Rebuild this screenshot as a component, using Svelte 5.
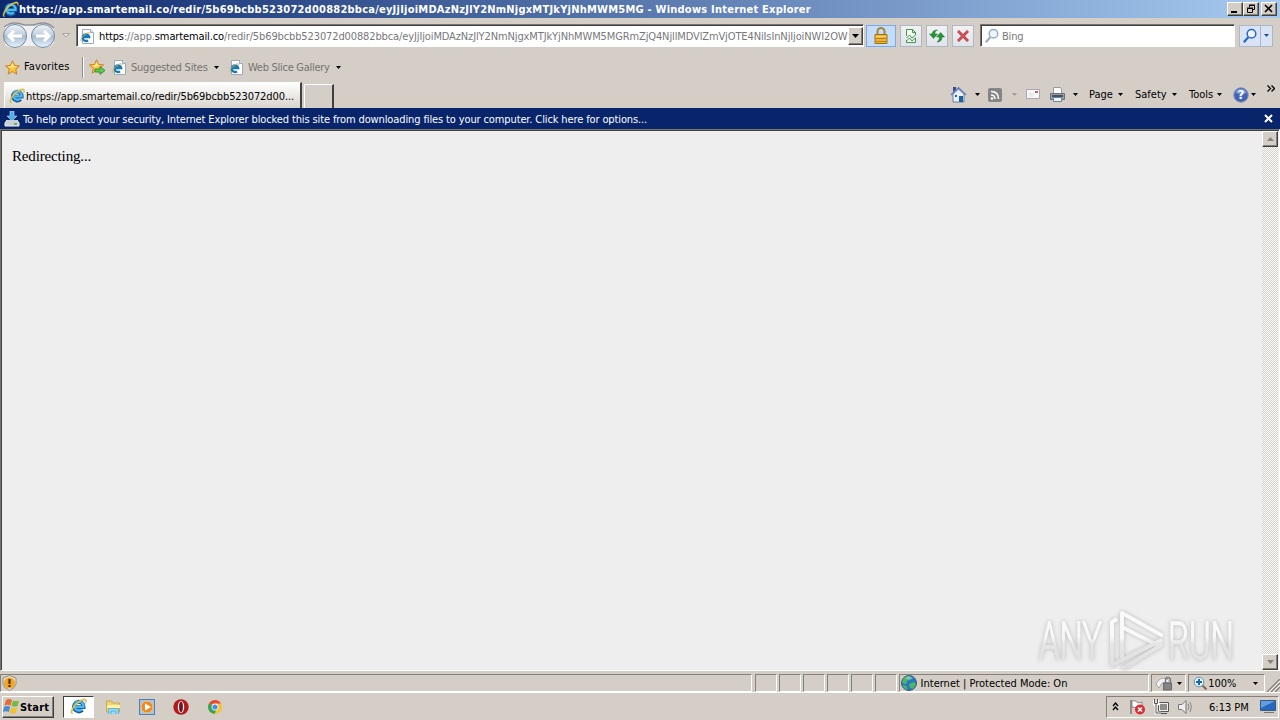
<script lang="ts">
	const host = 'https://app.smartemail.co';
	const title = host + '/redir/5b69bcbb523072d00882bbca/eyJjIjoiMDAzNzJlY2NmNjgxMTJkYjNhMWM5MG - Windows Internet Explorer';
	const path = '/redir/5b69bcbb523072d00882bbca/eyJjIjoiMDAzNzJlY2NmNjgxMTJkYjNhMWM5MGRmZjQ4NjllMDVlZmVjOTE4NiIsInNjIjoiNWI2OW';
	const menus = ['Page', 'Safety', 'Tools'];
	const emptyPanes = [1, 2, 3, 4, 5, 6];
</script>

{#snippet ie(size: number)}
	<svg class="icon" width={size} height={size} viewBox="0 0 16 16">
		<path d="M11.6 11.2A4.5 4.5 0 1 1 12.8 8.6H5.2" fill="none" stroke="#135d9c" stroke-width="3.7" />
		<path d="M11.3 10.7A4.2 4.2 0 1 1 12.6 8.4H5.2" fill="none" stroke="#4fb6ee" stroke-width="2.2" />
		<path d="M2.6 14.8C.3 15 .2 12 3 8.1 6.3 3.4 12.8-.6 15 1.3c.9.8.6 2.3-.2 3.8.1-1.3.1-2.4-.8-2.8-2.2-.7-6.6 2.3-9.4 5.8-2.5 3.2-3.2 6-2 6.7Z" fill="#f0d458" stroke="#a39134" stroke-width=".35" />
	</svg>
{/snippet}

{#snippet iePage()}
	<svg class="icon" width="15" height="15" viewBox="0 0 15 15">
		<path d="M2.5.5h8l3 3v11h-11Z" fill="#fff" stroke="#9aa9bd" />
		<path d="M10.5.5v3h3" fill="#dce5f2" stroke="#9aa9bd" />
		<path d="M8 11.3A3.3 3.3 0 1 1 9.2 8H3.5" fill="none" stroke="#1677b9" stroke-width="2.3" />
		<path d="M1.4 12.5C-.5 11.8 3 5.7 7.5 4c1.6-.5 2.5-.1 2.5 1" fill="none" stroke="#d0b44a" />
	</svg>
{/snippet}

{#snippet star()}
	<path d="m7.5.8 2 4.6 5 .5-3.8 3.3 1.1 4.9-4.3-2.6-4.3 2.6 1.1-4.9L.5 5.9l5-.5Z" fill="#fbc63b" stroke="#c77a16" stroke-width=".9" />
	<path d="m7.5 2.5 1.2 3.6 3.3.5-6.7 1.1-2.6-1 3.4-.5Z" fill="#ffeb91" />
{/snippet}

{#snippet caret(color = '#000')}
	<svg class="caret" width="5" height="3" viewBox="0 0 5 3"><path d="M0 0h5L2.5 3Z" fill={color} /></svg>
{/snippet}

{#snippet magnifier(color: string)}
	<svg class="icon" width="16" height="16" viewBox="0 0 16 16">
		<path d="m1.8 14.2 4.5-5" stroke={color} stroke-width="2.2" />
		<circle cx="9.5" cy="5.8" r="4.3" fill="#edf5ff" stroke={color} stroke-width="1.5" />
	</svg>
{/snippet}

<div class="screen">
	<header class="titlebar">
		{@render ie(17)}
		<span class="title low">{title}</span>
		<div class="window-buttons">
			<button aria-label="Minimize"><svg width="12" height="10"><path d="M2 8h6" stroke="#000" stroke-width="2" /></svg></button>
			<button aria-label="Restore"><svg width="12" height="10"><path d="M4.5 3V1.5h5v4H8M4 1h6M2.5 4.5h5v4h-5ZM2 4h6" fill="none" stroke="#000" /></svg></button>
			<button class="close" aria-label="Close"><svg width="12" height="10"><path d="m2 1 7 7m0-7L2 8" stroke="#000" stroke-width="1.6" /></svg></button>
		</div>
	</header>

	<div class="nav-row">
		<svg class="nav-arrows" width="58" height="28" viewBox="0 0 58 28">
			<defs>
				<linearGradient id="orb" x2="0" y2="1">
					<stop stop-color="#eef3f8" /><stop offset=".45" stop-color="#c3d0df" /><stop offset=".5" stop-color="#a7bbcf" /><stop offset="1" stop-color="#e6f6ff" />
				</linearGradient>
			</defs>
			<path d="M5 4Q14-2 24 3h10q12-5 20 4v14q-8 8-19 3H23Q13 29 5 23Z" fill="#eef0f3" />
			<path d="M4 5Q13-2 24 3h10q12-5 20 3" fill="none" stroke="#8d929b" stroke-width="1.5" />
			<circle cx="15" cy="14" r="11.5" fill="url(#orb)" stroke="#74899d" />
			<circle cx="43" cy="14" r="11.5" fill="url(#orb)" stroke="#74899d" />
			<path d="M22 14H9m5-5-5 5 5 5M36 14h13m-5-5 5 5-5 5" fill="none" stroke="#fff" stroke-width="3" />
		</svg>
		<svg class="recent" width="8" height="5"><path d="M.5.5h7L4 4Z" fill="#e6e2dc" stroke="#aaa69f" /></svg>
		<div class="address sunken">
			{@render iePage()}
			<span class="url"><b>https</b>://app.<b>smartemail.co</b>{path}</span>
			<button class="drop" aria-label="Show addresses"><svg width="7" height="4"><path d="M0 0h7L3.5 4Z" /></svg></button>
		</div>
		<button class="lock" aria-label="Security report">
			<svg width="16" height="18" viewBox="0 0 16 18">
				<path d="M4.5 8V4.5a3.5 3.5 0 0 1 7 0V8" fill="none" stroke="#a3863a" stroke-width="2" />
				<path d="M2 7.5h12v9H2Z" fill="#efb42c" stroke="#9b721d" />
				<path d="M3 9.5h10" stroke="#ffdc70" /><path d="M3 11.5h10M3 14.5h10" stroke="#ba831e" />
			</svg>
		</button>
		<button class="tool" aria-label="Compatibility view">
			<svg width="14" height="16" viewBox="0 0 14 16"><path d="M2.5 8V1.5h6l3 3V7L8 10 5.5 7l-3 3M8.5 1.5v3h3M2.5 12v2.5h9V10L8 13l-2.5-3-3 3" fill="#f1faed" stroke="#439650" /></svg>
		</button>
		<button class="tool" aria-label="Refresh">
			<svg width="16" height="14" viewBox="0 0 16 14"><path d="M8.5 1C5 1 3.3 2.3 3.1 5H.5l4 4.5 4-4.5H5.8C5.8 3 6.5 1.8 8.5 1ZM8 13c3.3-.2 5-1.5 5-5h2.6l-4-4.5-4 4.5h2.8c0 2.4-.6 3.8-2.4 5Z" fill="#299336" stroke="#187425" stroke-width=".5" /></svg>
		</button>
		<button class="tool" aria-label="Stop">
			<svg width="14" height="14"><path d="m2 2 10 10M12 2 2 12" stroke="#a73038" stroke-width="2.6" /><path d="m2 2 10 10M12 2 2 12" stroke="#e25a61" stroke-width="1.2" /></svg>
		</button>
		<div class="search sunken">{@render magnifier('#9cacc2')}<span class="low">Bing</span></div>
		<button class="go" aria-label="Search">{@render magnifier('#2867c5')}</button>
		<button class="go-menu" aria-label="Search options">{@render caret('#244d85')}</button>
	</div>

	<div class="favorites">
		<svg class="icon" width="15" height="15">{@render star()}</svg>
		<span class="fav-label">Favorites</span>
		<i class="divider"></i>
		<svg class="icon add-fav" width="17" height="16">{@render star()}<path d="M6 10h5V7.5l5 4-5 4V13H6Z" fill="#62c84d" stroke="#26872d" stroke-width=".8" /></svg>
		{@render iePage()}
		<span class="link low suggested">Suggested Sites</span>
		{@render caret()}
		<span class="slice-icon">{@render iePage()}</span>
		<span class="link low gallery">Web Slice Gallery</span>
		{@render caret()}
	</div>

	<div class="tab-row">
		<div class="tab">{@render ie(16)}<span class="low">{host}/redir/5b69bcbb523072d00...</span></div>
		<div class="new-tab"></div>
		<div class="commands">
			<svg class="icon" width="17" height="17" viewBox="0 0 17 17">
				<path d="M3 8v8h11V8L8.5 3Z" fill="#e8f0fa" stroke="#687e9f" />
				<path d="M3 1h3v3L3 6Z" fill="#344b9b" /><path d="m1 9 7.5-7L16 9" fill="none" stroke="#6684b6" stroke-width="1.7" />
				<path d="M9 10h4v6H9Z" fill="#1e619b" /><path d="M5 9h2v2H5Z" fill="#415580" />
			</svg>
			<span class="home-caret">{@render caret()}</span>
			<svg class="icon feed" width="14" height="14"><rect width="14" height="14" rx="2" fill="#858585" /><circle cx="4" cy="10.5" r="1.3" fill="#fff" /><path d="M3 7q4 0 4 4M3 3.5q7.5 0 7.5 7.5" fill="none" stroke="#fff" stroke-width="1.5" /></svg>
			<span class="feed-caret">{@render caret('#a39d94')}</span>
			<svg class="icon mail" width="14" height="11"><path d="M.5.5h13v9H.5Z" fill="#f8f7f8" stroke="#aaa5b2" /><path d="M9 2h3v2H9Z" fill="#c6646c" /><path d="M3 5h5M3 7h4" stroke="#ddd" /></svg>
			<svg class="icon printer" width="17" height="16"><path d="M4.5 7V.5h7l1 2V7" fill="#fff" stroke="#999" /><path d="M1.5 6.5h14v6h-14Z" fill="#9a9fa5" stroke="#6b7078" /><path d="M3 8h11v2H3Z" fill="#4a515a" /><path d="M4.5 10.5h8v4h-8Z" fill="#edf7ff" stroke="#6685a3" /></svg>
			<span class="print-caret">{@render caret()}</span>
			{#each menus as menu}
				<span class="menu {menu.toLowerCase()}"><span>{menu}</span>{@render caret()}</span>
			{/each}
			<svg class="icon help" width="16" height="16"><circle cx="8" cy="8" r="7.2" fill="#3f64b9" stroke="#7d8baa" /><path d="M2.5 6Q3 2 8 2t5.5 4Q8 8 2.5 6" fill="#7b9add" /><text x="8" y="12.3" text-anchor="middle">?</text></svg>
			<span class="help-caret">{@render caret()}</span>
			<svg class="more" width="8" height="7"><path d="m.5.5 3 3-3 3m4-6 3 3-3 3" fill="none" stroke="#000" stroke-width="1.3" /></svg>
		</div>
	</div>

	<div class="info-bar">
		<svg class="icon" width="16" height="16"><path d="M6 0h4v5h3l-5 5-5-5h3Z" fill="#55adeb" stroke="#b3dffb" stroke-width=".6" /><path d="m3 9-2 3v3h14v-3l-2-3" fill="#c9d0d4" stroke="#eee" /><path d="M10 13h3" stroke="#43a455" stroke-width="1.5" /></svg>
		<span class="low">To help protect your security, Internet Explorer blocked this site from downloading files to your computer. Click here for options...</span>
		<svg class="dismiss" width="9" height="9"><path d="m1 1 7 7m0-7L1 8" stroke="#fff" stroke-width="2" /></svg>
	</div>

	<main>
		<p>Redirecting...</p>
		<div class="scrollbar">
			<button aria-label="Scroll up"><svg width="7" height="4"><path d="M0 4h7L3.5 0Z" fill="#85817b" /></svg></button>
			<button aria-label="Scroll down"><svg width="7" height="4"><path d="M0 0h7L3.5 4Z" fill="#85817b" /></svg></button>
		</div>
		<svg class="watermark" width="210" height="68" viewBox="0 0 210 68">
			<defs>
				<linearGradient id="mark" gradientUnits="userSpaceOnUse" x1="0" y1="8" x2="0" y2="66"><stop offset=".45" stop-color="#fcfcfc" /><stop offset=".57" stop-color="#e4e4e4" /><stop offset="1" stop-color="#dcdcdc" /></linearGradient>
			</defs>
			<g class="mark">
				<text x="8" y="56" textLength="63" lengthAdjust="spacingAndGlyphs">ANY</text>
				<text x="137" y="56" textLength="66" lengthAdjust="spacingAndGlyphs">RUN</text>
				<path d="M91 55V10l41 23M86 16l-5 3v43l50-25M91 24l37 19M91 66l41-25" fill="none" stroke="url(#mark)" stroke-width="4" stroke-linejoin="round" />
			</g>
		</svg>
	</main>

	<footer class="status">
		<div class="pane message"><svg class="icon" width="15" height="16"><path d="M7.5.5 14 3v6q-1 4-6.5 6.5Q2 13 1 9V3Z" fill="#eee2c4" stroke="#8d8c88" /><circle cx="7.5" cy="8" r="5.5" fill="#f3a51d" /><path d="M7.5 4v5m0 1v2" stroke="#352812" stroke-width="2" /></svg></div>
		{#each emptyPanes as pane (pane)}<div class="pane empty"></div>{/each}
		<div class="pane zone">
			<svg class="icon" width="16" height="16"><circle cx="8" cy="8" r="7.5" fill="#2679bd" stroke="#375e83" /><path d="M2 4q4-4 7-3l1 3-4 2-1 3-4-1Zm6 5 5-2 2 2-3 5-3-1ZM3 10l3 2v3q-4-2-4-5" fill="#50b565" /><path d="M4 3q4-3 8 0-3 3-8 0" fill="#a6ddf4" opacity=".55" /></svg>
			<span class="low">Internet | Protected Mode: On</span>
		</div>
		<div class="pane privacy">
			<svg class="icon" width="18" height="16"><path d="M1 9q4-8 11-5l3 3-8 1-3 5Z" fill="#f2f2f2" stroke="#aaa" /><path d="M10.5 8V5a2.5 2.5 0 0 1 5 0v3" fill="none" stroke="#777" stroke-width="1.4" /><path d="M8.5 8h8v7h-8Z" fill="#858585" stroke="#666" /></svg>
			{@render caret()}
		</div>
		<div class="pane zoom">
			<svg class="icon" width="15" height="15"><circle cx="6" cy="6" r="4.8" fill="#e8f4ff" stroke="#5c91bd" /><path d="M3 6h6M6 3v6" stroke="#1769b2" stroke-width="2" /><path d="m9.5 9.5 4 4" stroke="#856b54" stroke-width="2.2" /></svg>
			<span class="low">100%</span>{@render caret()}
		</div>
		<svg class="grip" width="13" height="13"><path d="M0 13 13 0M4 13l9-9M8 13l5-5" stroke="#8a867f" stroke-width="1.5" /><path d="M2 13 13 2M6 13l7-7" stroke="#fff" /></svg>
	</footer>

	<div class="taskbar">
		<button class="start">
			<svg width="18" height="17" viewBox="0 0 18 17"><path d="M3 2q3-2 6 0L7.5 7.5q-3-1.5-6 0Z" fill="#e66b35" /><path d="M10 2.5q3 1.5 6 0L14.5 8q-3 1.5-6 0Z" fill="#77b843" /><path d="M1.2 8.8q3-1.5 6 0L5.8 14q-3-1.5-6 0Z" fill="#4a8bd0" /><path d="M8.2 9.5q3 1.5 6 0L12.8 15q-3 1.5-6 0Z" fill="#f2bf2f" /></svg>
			<span class="low">Start</span>
		</button>
		<div class="launch active">{@render ie(17)}</div>
		<svg class="app folder" width="16" height="16"><path d="M1.5 2h5l1 2h7v9h-13Z" fill="#edd475" stroke="#c9ab4f" /><path d="M2 6h13v3H2Z" fill="#fff1a7" /><path d="M3.5 15V9.5h10V15M6 15v-3h5v3" fill="#9bd7ed" stroke="#61b3d3" /></svg>
		<svg class="app player" width="16" height="16"><rect x=".5" y=".5" width="15" height="15" fill="#9fc6eb" stroke="#547fac" /><circle cx="8" cy="8" r="6" fill="#ef8922" stroke="#f8c17c" /><path d="m6 4.5 6 3.5-6 3.5Z" fill="#fff" /></svg>
		<svg class="app opera" width="16" height="16"><circle cx="8" cy="8" r="7.7" fill="#b3191e" /><ellipse cx="8" cy="8" rx="3.2" ry="6" fill="#fff" /><ellipse cx="8" cy="8" rx="1.9" ry="5.2" fill="#771014" /></svg>
		<svg class="app chrome" width="14" height="14"><circle cx="7" cy="7" r="7" fill="#f5c432" /><path d="M7 7 1 3.5A7 7 0 0 1 13 3.5H7Z" fill="#e34b3d" /><path d="M7 7 1 3.5A7 7 0 0 0 6.5 14L9 8Z" fill="#35a455" /><circle cx="7" cy="7" r="3.4" fill="#fff" /><circle cx="7" cy="7" r="2.6" fill="#4b8ce9" /></svg>
		<div class="tray">
			<svg class="expand" width="7" height="9"><path d="m1 4 2.5-3L6 4M1 8l2.5-3L6 8" fill="none" stroke="#000" stroke-width="1.3" /></svg>
			<svg class="flag" width="17" height="16"><path d="M2 1v14" stroke="#777" stroke-width="1.5" /><path d="M3 2q3-1 5 1t5 0v6q-3 1-5 0T3 8Z" fill="#fff" stroke="#888" /><circle cx="11" cy="10.5" r="5" fill="#db2c32" /><path d="m9 8.5 4 4m0-4-4 4" stroke="#fff" stroke-width="1.6" /></svg>
			<svg class="network" width="17" height="16"><path d="M5.5 3.5h10v9h-10Z" fill="#eee" stroke="#555" /><path d="M7 5h7v6H7Z" fill="#8d8d8d" /><path d="M8 14.5h6" stroke="#555" /><path d="M1 1v4h4V1M3 5v9h5" fill="none" stroke="#fff" stroke-width="2.6" /><path d="M1.5 0v4.5h3V0M3 5v9h5" fill="none" stroke="#555" /></svg>
			<svg class="speaker" width="17" height="16"><path d="M1.5 5.5H5l4-4v13l-4-4H1.5Z" fill="#eee" stroke="#777" /><path d="M11 5q2 3 0 6m2-8q3 5 0 10" fill="none" stroke="#888" /></svg>
			<span class="clock low">6:13 PM</span>
			<svg class="desktop" width="16" height="14"><path d="M.5.5h15v10H.5Z" fill="#2767bd" stroke="#365985" /><path d="M1 1h14L1 8Z" fill="#619fe0" /><path d="M4 12.5h10" stroke="#777" /></svg>
		</div>
	</div>
</div>

<style>
	:global(body) { margin: 0; overflow: hidden; }
	.screen {
		width: 1280px; height: 720px; display: flex; flex-direction: column;
		background: #d4cec7; color: #000; overflow: hidden;
		font: 11px/14px Tahoma, 'DejaVu Sans Condensed', 'DejaVu Sans', sans-serif;
		font-stretch: condensed;
	}
	.screen * { box-sizing: border-box; }
	svg { display: block; flex: none; }
	span { white-space: nowrap; }
	.low { padding-top: 2px; }
	button { font: inherit; padding: 0; margin: 0; border: 0; border-radius: 0; display: flex; align-items: center; justify-content: center; flex: none; }

	.titlebar { height: 18px; flex: none; display: flex; align-items: center; padding: 0 3px 0 2px; color: #fff; background: linear-gradient(90deg, #0c276c, #a6caf0); }
	.title { font-weight: bold; letter-spacing: 0.23px; }
	.window-buttons { display: flex; margin-left: auto; }
	.window-buttons button, .drop, .scrollbar button {
		background: #d4cec7; border: 1px solid; border-color: #fff #404040 #404040 #fff;
		box-shadow: inset -1px -1px #85817b;
	}
	.window-buttons button { width: 16px; height: 14px; }
	.window-buttons .close { margin-left: 2px; }

	.nav-row { height: 35px; flex: none; display: flex; align-items: center; }
	.recent { margin: 0 6px 0 4px; }
	.sunken { background: #fff; border: 1px solid; border-color: #77736e #fff #fff #77736e; box-shadow: inset 1px 1px #404040; }
	.address { width: 788px; height: 23px; display: flex; align-items: center; padding: 1px 1px 0 3px; margin-right: 2px; }
	.url { width: 749px; margin-left: 4px; padding-top: 1px; color: #77777b; letter-spacing: -0.12px; }
	.url b { color: #000; font-weight: normal; }
	.drop { width: 15px; height: 18px; margin-left: auto; }
	.lock { width: 30px; height: 22px; background: #c5dcfb; border: 1px solid #78aaf0; margin-right: 4px; }
	.tool, .go, .go-menu { width: 22px; height: 22px; background: linear-gradient(#f2f2f4, #dfe3eb); border: 1px solid #afb7c3; margin-right: 4px; }
	.search { width: 255px; height: 23px; display: flex; align-items: center; padding-left: 3px; margin-left: 2px; color: #77777b; letter-spacing: -0.2px; }
	.search span { margin-left: 2px; }
	.go { margin: 0 0 0 4px; background: #d8e3f6; }
	.go-menu { width: 13px; margin: 0 0 0 -1px; background: #d8e3f6; }

	.favorites { height: 28px; flex: none; display: flex; align-items: center; padding-left: 5px; }
	.fav-label { width: 58px; margin-left: 4px; letter-spacing: 0.1px; }
	.divider { width: 2px; height: 21px; border-left: 1px solid #918c85; border-right: 1px solid #fff; margin-right: 5px; }
	.add-fav { margin-right: 6px; }
	.link { color: #77736e; margin-left: 4px; letter-spacing: -0.22px; }
	.suggested { width: 83px; }
	.slice-icon { margin-left: 10px; }
	.gallery { width: 88px; letter-spacing: -0.28px; }

	.tab-row { height: 27px; flex: none; display: flex; align-items: flex-end; }
	.tab { width: 298px; height: 26px; margin-left: 4px; padding-left: 4px; display: flex; align-items: center; background: linear-gradient(#fff, #d8d3cc); border: 1px solid #fff; border-right: 2px solid #404040; border-bottom: 0; }
	.tab span { margin-left: 1px; letter-spacing: -0.1px; }
	.new-tab { width: 30px; height: 24px; margin-left: 2px; border: 1px solid #fff; border-right: 2px solid #404040; border-bottom: 0; }
	.commands { display: flex; align-items: center; height: 27px; margin-left: 616px; }
	.home-caret { margin: 0 8px 0 8px; }
	.feed-caret { margin: 0 9px 0 10px; }
	.printer { margin-left: 9px; }
	.print-caret { margin: 0 11px 0 7px; }
	.menu { display: flex; align-items: center; justify-content: space-between; }
	.page { width: 34px; margin-right: 12px; }
	.safety { width: 42px; margin-right: 12px; }
	.tools { width: 33px; margin-right: 11px; }
	.help text { font: bold 12px 'DejaVu Sans', sans-serif; fill: #fff; }
	.help-caret { margin: 0 11px 0 2px; }
	.more { margin-bottom: 13px; }

	.info-bar { height: 21px; flex: none; display: flex; align-items: center; padding-left: 4px; color: #fff; background: #08246b; }
	.info-bar span { margin-left: 3px; letter-spacing: -0.12px; }
	.dismiss { margin: 0 7px 1px auto; }

	main { position: relative; height: 542px; flex: none; display: flex; background: #eee; border: 1px solid; border-color: #77736e #fff #fff #77736e; box-shadow: inset 1px 1px #404040; }
	main p { flex: 1; margin: 16px 0 0 11px; font: 15px/20px 'Liberation Serif', serif; letter-spacing: -0.15px; }
	.scrollbar { width: 16px; height: 539px; margin: 1px 1px 0 0; display: flex; flex-direction: column; justify-content: space-between; background: repeating-conic-gradient(#fff 0 25%, #d4cec7 0 50%) 0 0 / 2px 2px; }
	.scrollbar button { width: 16px; height: 16px; }
	.watermark { position: absolute; right: 38px; bottom: -1px; }
	.mark { filter: drop-shadow(0 0 2px #aaa); opacity: .8; }
	.mark text { font: 300 52px Roboto, sans-serif; fill: url(#mark); stroke: url(#mark); stroke-width: 1.3; }

	.status { height: 22px; flex: none; display: flex; padding-top: 3px; border-bottom: 1px solid #fff; gap: 2px; }
	.pane { height: 18px; display: flex; align-items: center; border: 1px solid; border-color: #85817b #fff #fff #85817b; }
	.message { width: 753px; margin-right: 1px; padding-left: 1px; }
	.empty { width: 22px; }
	.zone { width: 251px; padding-left: 1px; }
	.zone span { margin-left: 4px; }
	.privacy { width: 35px; gap: 4px; padding-left: 3px; }
	.zoom { width: 77px; padding-left: 4px; }
	.zoom span { width: 45px; margin-left: 0; }
	.grip { align-self: flex-end; }

	.taskbar { height: 27px; flex: none; display: flex; align-items: center; padding-left: 2px; }
	.start { width: 52px; height: 22px; justify-content: flex-start; background: #d4cec7; border: 1px solid; border-color: #fff #404040 #404040 #fff; box-shadow: inset -1px -1px #85817b; }
	.start span { font-weight: bold; margin-left: -1px; letter-spacing: 0.2px; }
	.launch { width: 31px; height: 22px; margin-left: 9px; display: flex; align-items: center; justify-content: center; background: #fff; border: 1px solid; border-color: #404040 #fff #fff #404040; }
	.folder { margin-left: 11px; }
	.player { margin-left: 18px; }
	.opera { margin-left: 18px; }
	.chrome { margin-left: 19px; }
	.tray { width: 173px; height: 22px; margin: 0 1px 0 auto; display: flex; align-items: center; border: 1px solid; border-color: #85817b #fff #fff #85817b; }
	.expand { margin: 0 10px 0 5px; }
	.network { margin-left: 7px; }
	.speaker { margin-left: 7px; }
	.clock { margin-left: 15px; }
	.desktop { margin: 0 2px 0 auto; }
</style>
